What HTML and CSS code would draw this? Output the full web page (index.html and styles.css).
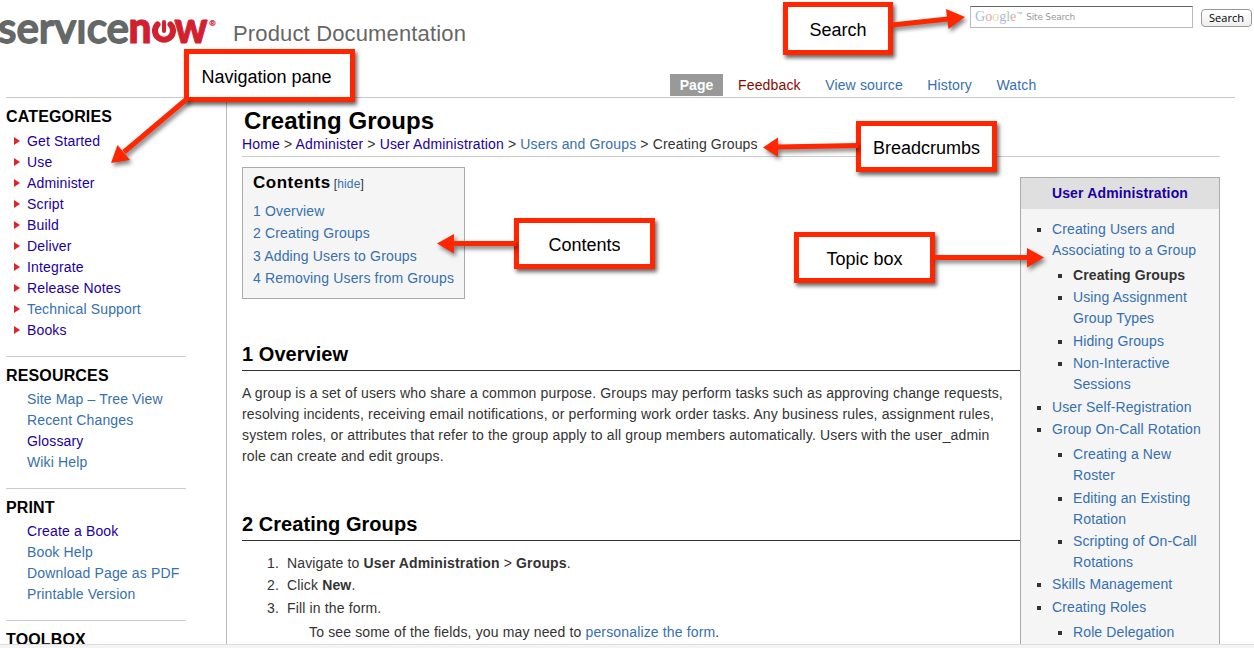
FILE: index.html
```html
<!DOCTYPE html>
<html lang="en">
<head>
<meta charset="utf-8">
<title>Creating Groups - Product Documentation</title>
<link rel="stylesheet" href="styles.css">
</head>
<body>
<div class="page">
  <header class="header">
    <div class="brand">
      <svg class="logo" width="220" height="40" viewBox="0 0 220 40" role="img" aria-label="servicenow">
        <defs><clipPath id="x-height"><rect x="0" y="9" width="130" height="31"/></clipPath></defs>
        <text class="logo-grey" x="-2" y="33" textLength="131" lengthAdjust="spacingAndGlyphs" clip-path="url(#x-height)">service</text>
        <text class="logo-red" x="128.500" y="33" textLength="23" lengthAdjust="spacingAndGlyphs">n</text>
        <path d="M157.500 14.500A9 9 0 1 0 170.500 14.500" fill="none" stroke="#d2202f" stroke-width="6" stroke-linecap="round"/>
        <path d="M164 12V21" stroke="#d2202f" stroke-width="4" stroke-linecap="round"/>
        <text class="logo-red" x="174.500" y="33" textLength="33" lengthAdjust="spacingAndGlyphs">w</text>
        <text class="logo-mark" x="209.500" y="16">®</text>
      </svg>
      <span class="product">Product Documentation</span>
    </div>
    <form class="search">
      <div class="field"><span class="google"><i class="b">G</i><i class="r">o</i><i class="y">o</i><i class="b">g</i><i class="g">l</i><i class="r">e</i></span><sup class="tm">™</sup><span class="hint">Site Search</span></div>
      <button class="go" type="button">Search</button>
    </form>
    <nav class="tabs">
      <a class="tab current">Page</a><a class="tab missing">Feedback</a><a class="tab">View source</a><a class="tab">History</a><a class="tab">Watch</a>
    </nav>
  </header>
  <div class="body">
    <aside class="sidebar">
      <section class="group">
        <h3>CATEGORIES</h3>
        <ul class="arrows">
          <li><a class="seen">Get Started</a></li><li><a class="seen">Use</a></li><li><a class="seen">Administer</a></li><li><a class="seen">Script</a></li><li><a class="seen">Build</a></li><li><a class="seen">Deliver</a></li><li><a class="seen">Integrate</a></li><li><a class="seen">Release Notes</a></li><li><a>Technical Support</a></li><li><a class="seen">Books</a></li>
        </ul>
      </section>
      <section class="group">
        <h3>RESOURCES</h3>
        <ul><li><a>Site Map – Tree View</a></li><li><a>Recent Changes</a></li><li><a class="seen">Glossary</a></li><li><a>Wiki Help</a></li></ul>
      </section>
      <section class="group">
        <h3>PRINT</h3>
        <ul><li><a class="seen">Create a Book</a></li><li><a>Book Help</a></li><li><a>Download Page as PDF</a></li><li><a>Printable Version</a></li></ul>
      </section>
      <section class="group"><h3>TOOLBOX</h3></section>
    </aside>
    <main class="content">
      <h1>Creating Groups</h1>
      <div class="crumbs"><a class="seen">Home</a> &gt; <a class="seen">Administer</a> &gt; <a class="seen">User Administration</a> &gt; <a>Users and Groups</a> &gt; Creating Groups</div>
      <div class="columns">
        <article class="article">
          <div class="toc">
            <div class="toc-head"><b>Contents</b> <small>[<a>hide</a>]</small></div>
            <ul><li><a>1 Overview</a></li><li><a>2 Creating Groups</a></li><li><a>3 Adding Users to Groups</a></li><li><a>4 Removing Users from Groups</a></li></ul>
          </div>
          <h2 class="first">1 Overview</h2>
          <p>A group is a set of users who share a common purpose. Groups may perform tasks such as approving change requests,<br>resolving incidents, receiving email notifications, or performing work order tasks. Any business rules, assignment rules,<br>system roles, or attributes that refer to the group apply to all group members automatically. Users with the user_admin<br>role can create and edit groups.</p>
          <h2>2 Creating Groups</h2>
          <ol>
            <li>Navigate to <b>User Administration</b> &gt; <b>Groups</b>.</li>
            <li>Click <b>New</b>.</li>
            <li>Fill in the form.<div class="note">To see some of the fields, you may need to <a>personalize the form</a>.</div></li>
          </ol>
        </article>
        <aside class="topics">
          <h4><a class="seen">User Administration</a></h4>
          <ul>
            <li><a>Creating Users and<br>Associating to a Group</a>
              <ul><li><b>Creating Groups</b></li><li><a>Using Assignment<br>Group Types</a></li><li><a>Hiding Groups</a></li><li><a>Non-Interactive<br>Sessions</a></li></ul></li>
            <li><a>User Self-Registration</a></li>
            <li><a>Group On-Call Rotation</a>
              <ul><li><a>Creating a New<br>Roster</a></li><li><a>Editing an Existing<br>Rotation</a></li><li><a>Scripting of On-Call<br>Rotations</a></li></ul></li>
            <li><a>Skills Management</a></li>
            <li><a>Creating Roles</a>
              <ul><li><a>Role Delegation</a></li></ul></li>
          </ul>
        </aside>
      </div>
    </main>
  </div>
  <div class="statusbar"></div>

  <div class="callout navigation">Navigation pane</div>
  <div class="callout find">Search</div>
  <div class="callout trail">Breadcrumbs</div>
  <div class="callout outline">Contents</div>
  <div class="callout topic">Topic box</div>
  <svg class="pointers" width="1254" height="648" viewBox="0 0 1254 648">
    <g stroke="#ff2600" stroke-width="5" fill="none">
      <path d="M188 98L124 152"/><path d="M892 25L948 19"/><path d="M858 145.500L778 147"/><path d="M516 243.500H453"/><path d="M934 257.500H1030"/>
    </g>
    <g fill="#ff2600">
      <path d="M111 163L117.500 145L130 160Z"/><path d="M965 17L946 9L948.500 29Z"/><path d="M750.500 147.500L765.500 137.500V157Z" transform="translate(12.500 0)"/><path d="M437 243.500L454 234V253.500Z"/><path d="M1044 257.500L1027 248V267.500Z"/>
    </g>
  </svg>
</div>
</body>
</html>
```
FILE: styles.css
```css
* { box-sizing: border-box; }
body { margin: 0; background: #fff; color: #333; font: 14px/21px "Liberation Sans", Arial, sans-serif; letter-spacing: 0.150px; }
ul, ol { list-style: none; margin: 0; padding: 0; }
h1, h2, h3, h4, p { margin: 0; }
a { color: #3670ae; white-space: nowrap; }
a.seen { color: #1c00a0; }
.page { position: relative; width: 1254px; height: 648px; overflow: hidden; }
.header { display: grid; grid-template-columns: 966px 1fr; grid-template-rows: 74px 23px; width: 1254px; height: 98px; }
.header::after { content: ""; grid-column: 1 / 3; height: 1px; margin: 0 19px 0 6px; background: #ccc; }
.brand { display: flex; align-items: flex-start; padding-top: 10px; }
.logo { flex: none; overflow: visible; letter-spacing: 0; }
.logo-grey, .logo-red { stroke-linejoin: round; }
.logo-grey { font: 500 43px Lato, sans-serif; fill: #656866; stroke: #656866; stroke-width: 1.800; }
.logo-red { font: 900 43px Lato, sans-serif; fill: #d2202f; stroke: #d2202f; stroke-width: 1; }
.logo-mark { font: 8px "Liberation Sans", sans-serif; fill: #d2202f; stroke: #d2202f; stroke-width: 0.300; }
.product { margin: 11px 0 0 13px; color: #666; font-size: 22px; line-height: 26px; white-space: nowrap; }
.search { display: flex; align-items: flex-start; padding: 6px 0 0 4px; gap: 8px; letter-spacing: 0; }
.field { display: flex; align-items: flex-start; width: 223px; height: 22px; padding: 0 4px; border: 1px solid #bbb; border-top-color: #666; white-space: nowrap; }
.google { font: 14px/20px "Liberation Serif", serif; }
.google i { font-style: normal; }
.google .b { color: #a6b9dd; } .google .r { color: #e3a5a5; } .google .y { color: #e7d89e; } .google .g { color: #a7cfaa; }
.tm { margin: 0; color: #aaa; font-size: 6px; line-height: 14px; }
.hint { margin-left: 4px; color: #999; font: 9px/20px "DejaVu Sans", sans-serif; letter-spacing: -0.200px; }
.go { width: 51px; height: 18px; margin-top: 3px; padding: 0; border: 1px solid #999; border-radius: 4px; background: linear-gradient(#fff, #eee); color: #000; font: 500 11px/16px "Open Sans", sans-serif; }
.tabs { grid-column: 1 / 3; display: flex; padding-left: 670px; }
.tab { height: 22px; line-height: 22px; margin-right: 24.500px; }
.tab.current { width: 53px; margin-right: 15px; background: #999; color: #fff; font-weight: bold; text-align: center; letter-spacing: 0; }
.tab.missing { color: #8b0a00; }
.body { display: flex; height: 546px; overflow: hidden; }
.sidebar { width: 227px; padding: 0 40px 0 6px; border-right: 1px solid #bbb; }
.group { padding: 9px 0 15px; border-bottom: 1px solid #ccc; }
.group h3 { height: 23px; color: #000; font-size: 16px; line-height: 19px; }
.group:first-child h3 { height: 24px; }
.group ul { padding-left: 21px; }
.arrows li { position: relative; }
.arrows li::before { content: ""; position: absolute; left: -13px; top: 6px; border-left: 6px solid #e2222c; border-top: 4px solid transparent; border-bottom: 4px solid transparent; }
.content { width: 978px; margin-left: 15px; }
h1 { padding: 9px 0 0 2px; height: 36px; color: #000; font-size: 24px; line-height: 28px; letter-spacing: 0.050px; }
.crumbs { height: 23px; border-bottom: 1px solid #ccc; white-space: nowrap; }
.columns { display: flex; }
.article { width: 778px; padding-top: 10px; }
.toc { width: 223px; height: 132px; padding: 4px 10px; border: 1px solid #aaa; background: #f5f5f5; white-space: nowrap; }
.toc-head { height: 29px; }
.toc-head b { color: #000; font-size: 17px; letter-spacing: 0.500px; }
.toc-head small { font-size: 12px; margin-left: -1px; }
.toc li { height: 22.4px; }
h2 { height: 30px; color: #000; border-bottom: 1px solid #333; font-size: 20px; line-height: 26px; letter-spacing: 0.050px; }
h2.first { margin-top: 42px; }
p { padding: 12px 0 44px; white-space: nowrap; }
ol { counter-reset: step; padding: 12px 0 0 45px; }
ol > li { position: relative; margin-bottom: 1.400px; counter-increment: step; }
ol > li::before { content: counter(step) "."; position: absolute; right: 741px; }
.note { padding: 3px 0 0 22px; }
.topics { width: 200px; height: 480px; margin-top: 20px; border: 1px solid #aaa; background: #f5f5f5; }
.topics h4 { height: 31px; background: #dfdfdf; font-size: 14px; line-height: 30px; text-align: center; }
.topics > ul { padding: 9.800px 0 0 31px; letter-spacing: 0.120px; }
.topics li { position: relative; margin-bottom: 1.400px; white-space: nowrap; }
.topics li::before { content: ""; position: absolute; left: -15px; top: 9px; width: 4px; height: 4px; background: #333; }
.topics ul ul { padding: 4.200px 0 0 21px; }
.statusbar { height: 4px; border-top: 1px solid #ddd; background: #f4f4f4; }
.callout { position: absolute; display: flex; align-items: center; justify-content: center; width: 141px; height: 51px; border: 5px solid #ff2600; background: #fff; box-shadow: 2px 3px 4px rgba(0,0,0,.6); color: #000; font-size: 18px; letter-spacing: 0; white-space: nowrap; }
.navigation { left: 184px; top: 49px; width: 171px; height: 53px; padding: 3px 6px 0 0; }
.find { left: 783px; top: 2px; width: 110px; height: 53px; padding-top: 3px; }
.trail { left: 856px; top: 121px; padding-top: 4px; }
.outline { left: 514px; top: 218px; padding-top: 3px; }
.topic { left: 794px; top: 232px; padding-top: 3px; }
.pointers { position: absolute; left: 0; top: 0; filter: drop-shadow(2px 3px 2px rgba(0,0,0,.5)); }
```
